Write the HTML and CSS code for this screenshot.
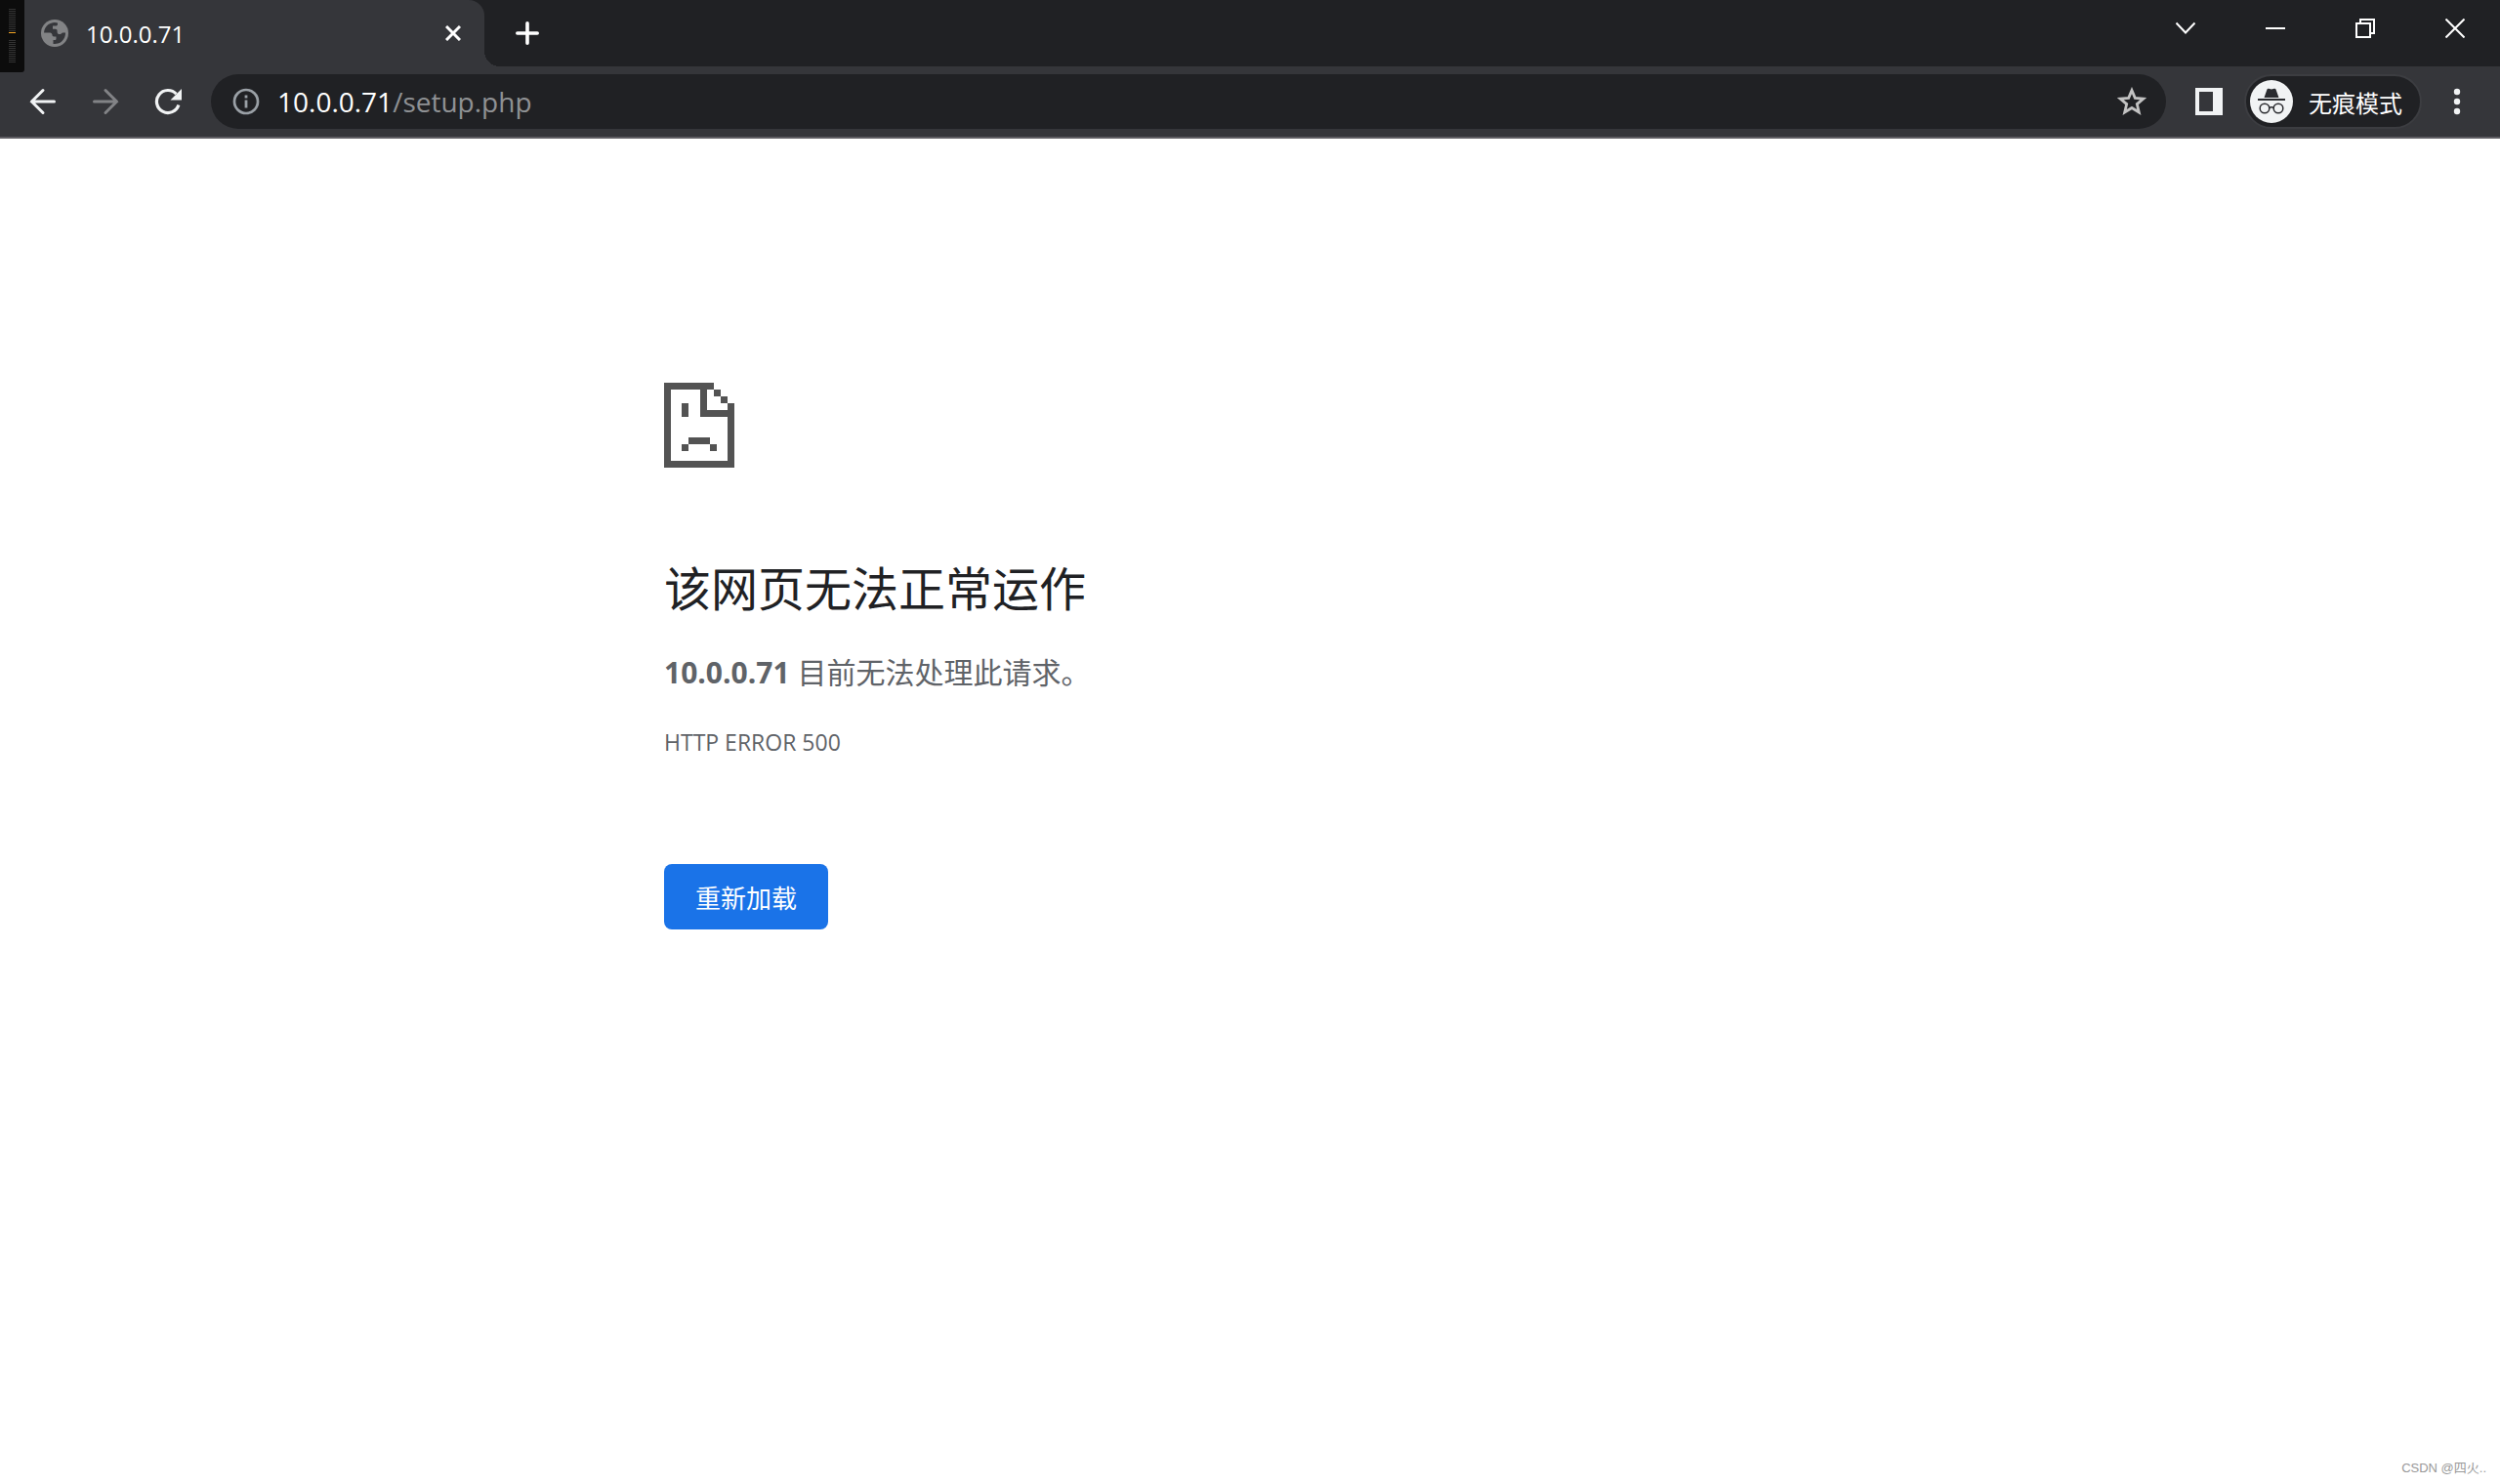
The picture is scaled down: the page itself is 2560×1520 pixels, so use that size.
FILE: index.html
```html
<!DOCTYPE html>
<html lang="zh-CN">
<head>
<meta charset="utf-8">
<title>10.0.0.71</title>
<link rel="stylesheet" href="styles.css">
</head>
<body>
<div class="browser">
  <header class="chrome">
    <div class="tab-strip">
      <div class="tab">
        <svg class="favicon" viewBox="0 0 28 28" aria-hidden="true"><circle cx="14" cy="14" r="14" fill="#828385"/><path fill="#35363a" d="M3 13.500A11 11 0 0 1 17 3.400v1.300c0 1-.8 1.800-1.800 1.800H12v3.200h2.800c1 0 1.800.8 1.800 1.800v1.200c0 1.400 1 2.300 2.300 2.300 1.500 0 2.400-.7 3-1.500H25A11 11 0 0 1 12.500 24.900V21h1.700c.8 0 1.300-.5 1.300-1.300V17.500h-2.300c-1 0-1.700-.7-1.700-1.700 0-1.300-1-2.300-2.300-2.300z"/></svg>
        <span class="tab-title">10.0.0.71</span>
        <button class="icon-button tab-close" aria-label="关闭标签页"><svg width="16" height="16" viewBox="0 0 16 16"><path d="M1 1l14 14M15 1L1 15" stroke="#fff" stroke-width="3"/></svg></button>
      </div>
      <button class="icon-button new-tab" aria-label="新标签页"><svg width="24" height="24" viewBox="0 0 24 24"><path d="M12 1.800v20.400M1.800 12h20.400" stroke="#fff" stroke-width="3.600" stroke-linecap="round"/></svg></button>
      <div class="window-controls">
        <button class="icon-button" aria-label="搜索标签页"><svg width="20" height="20" viewBox="0 0 20 20"><path d="M0.500 4.500l9.500 10 9.500-10" fill="none" stroke="#fff" stroke-width="2"/></svg></button>
        <button class="icon-button" aria-label="最小化"><svg width="20" height="20" viewBox="0 0 20 20"><path d="M0 10h20" stroke="#fff" stroke-width="2"/></svg></button>
        <button class="icon-button" aria-label="还原"><svg width="20" height="20" viewBox="0 0 20 20"><path d="M1 5h14v14H1zM5 5V1h14v14h-4" fill="none" stroke="#fff" stroke-width="2"/></svg></button>
        <button class="icon-button" aria-label="关闭"><svg width="20" height="20" viewBox="0 0 20 20"><path d="M.5.5l19 19M19.500.5l-19 19" stroke="#fff" stroke-width="2"/></svg></button>
      </div>
    </div>
    <div class="toolbar">
      <nav class="navigation">
        <button class="icon-button" aria-label="后退"><svg width="28" height="28" viewBox="0 0 28 28"><path d="M14 2.500L2.500 14 14 25.500M2.500 14h23" fill="none" stroke="#f1f3f4" stroke-width="3" stroke-linecap="round"/></svg></button>
        <button class="icon-button" aria-label="前进"><svg width="28" height="28" viewBox="0 0 28 28"><path d="M14 2.500L25.500 14 14 25.500M25.500 14h-23" fill="none" stroke="#828386" stroke-width="3" stroke-linecap="round"/></svg></button>
        <button class="icon-button" aria-label="重新加载此页"><svg width="28" height="28" viewBox="0 0 28 28"><path d="M24.900 17.500A11.500 11.500 0 1 1 22.500 6.300" fill="none" stroke="#f1f3f4" stroke-width="3.200"/><path d="M28 1v11.500H16.500z" fill="#f1f3f4"/></svg></button>
      </nav>
      <div class="address-bar">
        <svg width="28" height="28" viewBox="0 0 28 28" aria-hidden="true"><circle cx="14" cy="14" r="12" fill="none" stroke="#9aa0a6" stroke-width="2.700"/><path d="M14 12.500v8M14 7.500v3" stroke="#9aa0a6" stroke-width="2.800"/></svg>
        <span class="url">10.0.0.71<span class="url-path">/setup.php</span></span>
        <button class="icon-button" aria-label="为此标签页添加书签"><svg width="30" height="30" viewBox="0 0 30 30"><path d="M15 3.500l3.300 7.900 8.500.7-6.500 5.500 2 8.400L15 21.500 7.700 26l2-8.400-6.500-5.500 8.500-.7z" fill="none" stroke="#c2c2c2" stroke-width="2.800"/></svg></button>
      </div>
      <button class="icon-button side-panel" aria-label="侧边栏"><svg width="28" height="28" viewBox="0 0 28 28"><path fill="#f1f3f4" fill-rule="evenodd" d="M0 0h28v28H0zM4 4v20h14V4z"/></svg></button>
      <button class="incognito">
        <svg width="44" height="44" viewBox="0 0 44 44" aria-hidden="true"><circle cx="22" cy="22" r="22" fill="#f1f3f4"/><path fill="#2a2b2f" d="M14.500 18l3-8.500c.3-.8 1-1 1.700-.7l2.800.8 2.800-.8c.7-.3 1.400-.1 1.700.7l3 8.500zM8 19h28v2H8z"/><g fill="none" stroke="#2a2b2f" stroke-width="1.500"><circle cx="15" cy="29" r="4.800"/><circle cx="29" cy="29" r="4.800"/><path d="M19.500 28.500q2.500-1.500 5 0"/></g></svg>
        <span>无痕模式</span>
      </button>
      <button class="icon-button menu" aria-label="菜单"><svg width="8" height="28" viewBox="0 0 8 28"><g fill="#f1f3f4"><circle cx="4" cy="4" r="3.200"/><circle cx="4" cy="14" r="3.200"/><circle cx="4" cy="24" r="3.200"/></g></svg></button>
    </div>
    <div class="gauge" aria-hidden="true"><span class="ticks"></span><span class="marker"></span><span class="ticks"></span></div>
  </header>
  <main class="error-page">
    <svg class="error-icon" width="72" height="87" viewBox="0 0 72 87" shape-rendering="crispEdges" aria-hidden="true"><path fill="#535353" d="M0 0h51v7h-7v21h21v-7h7v66H0zM7 7v73h58V35H37V7zM51 7h7v7h-7zM58 14h7v7h-7zM18 21h7v14h-7zM25 56h22v7H25zM18 63h7v7h-7zM47 63h7v7h-7z" fill-rule="evenodd"/></svg>
    <h1>该网页无法正常运作</h1>
    <p class="summary"><strong>10.0.0.71</strong> 目前无法处理此请求。</p>
    <p class="error-code">HTTP ERROR 500</p>
    <button class="reload">重新加载</button>
  </main>
  <footer class="credit">CSDN @四火..</footer>
</div>
</body>
</html>
```
FILE: styles.css
```css
* {
  box-sizing: border-box;
}

body {
  margin: 0;
  background: #fff;
  color: #5f6368;
  font-family: "Open Sans", "Noto Sans CJK SC", sans-serif;
}

button {
  border: 0;
  padding: 0;
  font: inherit;
  cursor: pointer;
}

svg {
  display: block;
  flex: none;
}

.browser {
  display: flex;
  flex-direction: column;
  min-height: 100vh;
}

.chrome {
  position: relative;
  background: #35363a;
  border-bottom: 2px solid #5f5e63;
}

.icon-button {
  display: flex;
  flex: none;
  align-items: center;
  justify-content: center;
  background: none;
}

/* Tab strip */
.tab-strip {
  display: flex;
  height: 68px;
  background: #202124;
}

.tab {
  position: relative;
  display: flex;
  align-items: center;
  width: 496px;
  padding: 0 24px 0 42px;
  background: #35363a;
  border-radius: 0 16px 0 0;
}

.tab::after {
  content: "";
  position: absolute;
  left: 100%;
  bottom: 0;
  width: 16px;
  height: 16px;
  background: radial-gradient(circle at 100% 0, #202124 16px, #35363a 16px);
}

.favicon {
  width: 28px;
  height: 28px;
}

.tab-title {
  flex: 1;
  margin-left: 18px;
  color: #fff;
  font-size: 24px;
}

.new-tab {
  width: 56px;
  margin-left: 16px;
}

.window-controls {
  display: flex;
  height: 58px;
  margin-left: auto;
}

.window-controls .icon-button {
  width: 92px;
}

/* Toolbar */
.toolbar {
  display: flex;
  align-items: center;
  height: 72px;
  padding: 0 40px 0 30px;
}

.navigation {
  display: flex;
  gap: 36px;
}

.address-bar {
  display: flex;
  flex: 1;
  align-items: center;
  height: 56px;
  margin-left: 30px;
  padding: 0 20px 0 22px;
  background: #202124;
  border-radius: 28px;
}

.url {
  flex: 1;
  margin-left: 18px;
  color: #fff;
  font-size: 28px;
  line-height: 36px;
}

.url-path {
  color: #8f9194;
}

.side-panel {
  margin-left: 30px;
}

.incognito {
  display: flex;
  align-items: center;
  gap: 16px;
  height: 56px;
  margin-left: 22px;
  padding: 0 18px 0 4px;
  background: #202124;
  border: 2px solid #3c3d41;
  border-radius: 28px;
  color: #fff;
  font-size: 24px;
}

.menu {
  margin-left: 32px;
}

/* Level gauge over the corner of the window */
.gauge {
  position: absolute;
  top: 0;
  left: 0;
  display: flex;
  flex-direction: column;
  gap: 1px;
  width: 25px;
  height: 74px;
  padding: 9px 9px 10px;
  background: #0c0c0c;
  border-radius: 0 0 3px 0;
}

.ticks {
  height: 23px;
  background: repeating-linear-gradient(#333 0 1px, #0c0c0c 1px 2px);
}

.marker {
  height: 1px;
  margin-bottom: 6px;
  background: #f5a623;
}

/* Error page */
.error-page {
  flex: 1;
  width: 100%;
  max-width: 1200px;
  margin: 0 auto;
  padding-top: 250px;
}

h1 {
  margin: 88px 0 0;
  color: #202124;
  font-size: 48px;
  font-weight: 400;
  line-height: 72px;
}

.summary {
  margin: 26px 0 0;
  font-size: 30px;
  line-height: 48px;
}

.error-code {
  margin: 28px 0 0;
  font-size: 23px;
  line-height: 38px;
}

.reload {
  height: 67px;
  margin-top: 106px;
  padding: 0 32px;
  background: #1a73e8;
  border-radius: 8px;
  color: #fff;
  font-size: 26px;
}

.credit {
  padding: 0 14px 4px;
  color: #999;
  font-family: "Liberation Sans", "Noto Sans CJK SC", sans-serif;
  font-size: 13px;
  line-height: 24px;
  text-align: right;
}
```
